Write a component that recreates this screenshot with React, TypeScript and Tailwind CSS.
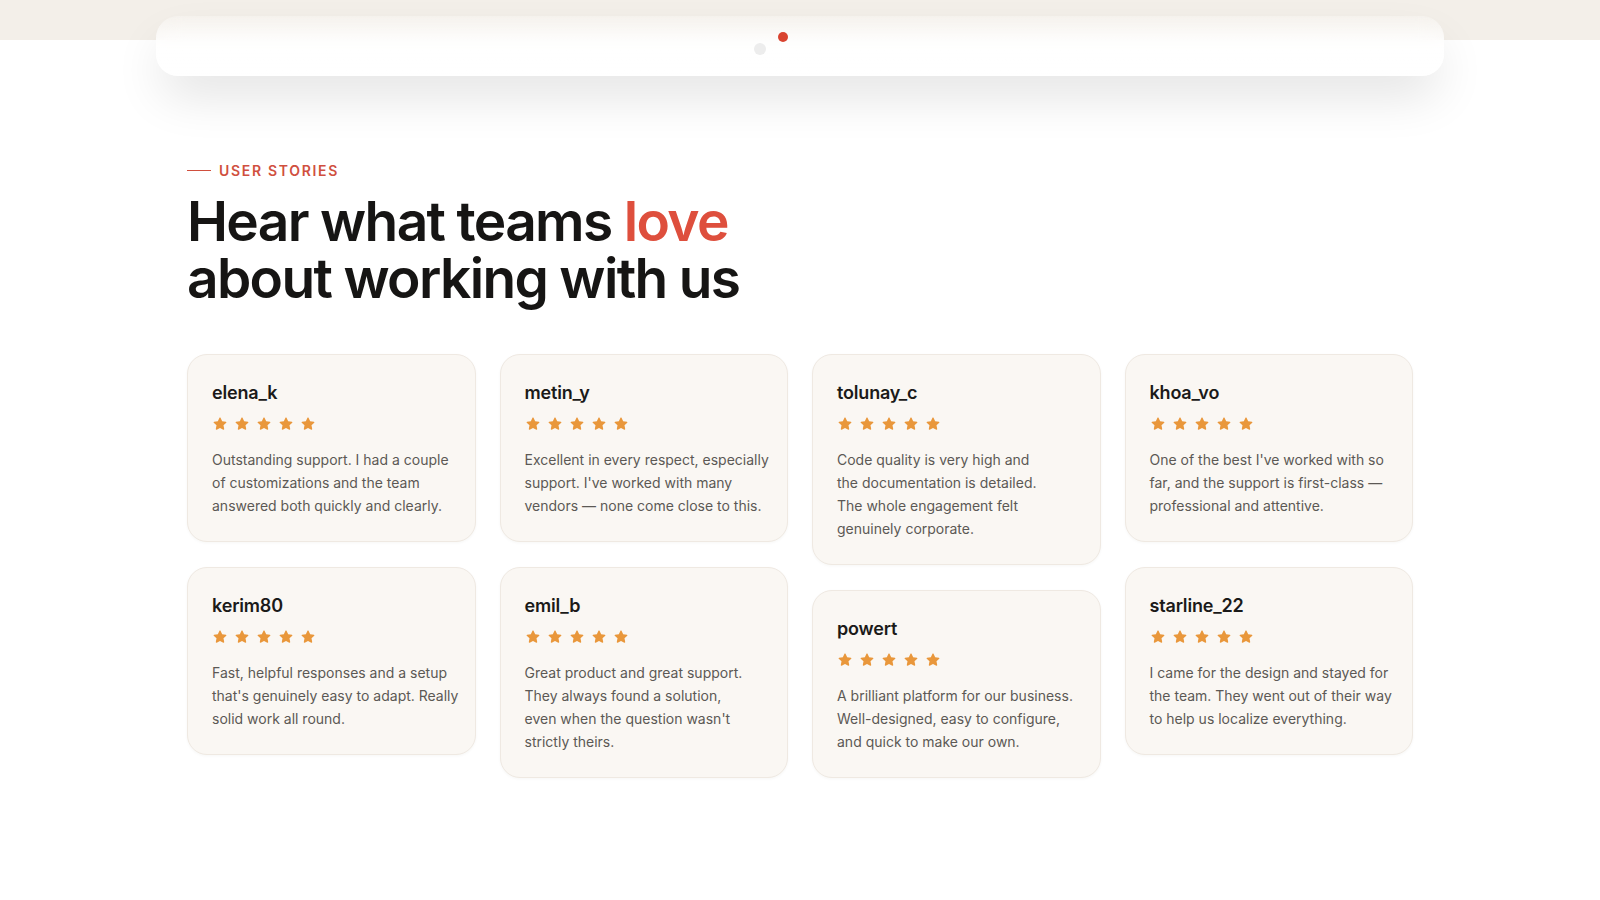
import { ReactNode } from 'react';

type Story = { user: string; lines: string[] };

const columns: Story[][] = [
  [
    { user: 'elena_k', lines: ['Outstanding support. I had a couple', 'of customizations and the team', 'answered both quickly and clearly.'] },
    { user: 'kerim80', lines: ['Fast, helpful responses and a setup', "that's genuinely easy to adapt. Really", 'solid work all round.'] },
  ],
  [
    { user: 'metin_y', lines: ['Excellent in every respect, especially', "support. I've worked with many", 'vendors — none come close to this.'] },
    { user: 'emil_b', lines: ['Great product and great support.', 'They always found a solution,', "even when the question wasn't", 'strictly theirs.'] },
  ],
  [
    { user: 'tolunay_c', lines: ['Code quality is very high and', 'the documentation is detailed.', 'The whole engagement felt', 'genuinely corporate.'] },
    { user: 'powert', lines: ['A brilliant platform for our business.', 'Well-designed, easy to configure,', 'and quick to make our own.'] },
  ],
  [
    { user: 'khoa_vo', lines: ["One of the best I've worked with so", 'far, and the support is first-class —', 'professional and attentive.'] },
    { user: 'starline_22', lines: ['I came for the design and stayed for', 'the team. They went out of their way', 'to help us localize everything.'] },
  ],
];

function StarIcon() {
  return (
    <svg viewBox="0 0 24 24" className="w-4 h-4" fill="#e9973b">
      <path d="M12 2.2c.35 0 .66.2.8.52l2.45 5.2 5.62.72c.74.1 1.04 1 .5 1.52l-4.12 3.9 1.05 5.6c.14.73-.63 1.29-1.29.93L12 17.840l-5.01 2.75c-.66.36-1.430-.2-1.29-.93l1.05-5.6-4.12-3.9c-.54-.52-.24-1.420.5-1.52l5.62-.72 2.45-5.2c.14-.32.45-.52.8-.52z" />
    </svg>
  );
}

function Card({ story }: { story: Story }) {
  return (
    <div className="rounded-[20px] border border-[#efe9e2] bg-[#faf7f3] px-6 pt-6 pb-6 shadow-[0_1px_3px_rgba(60,40,20,0.04)]">
      <h3 className="text-[18px] leading-7 font-semibold text-[#1b1a19] tracking-[-0.01em]">{story.user}</h3>
      <div className="mt-[9px] flex items-center gap-[6px]">
        {[0, 1, 2, 3, 4].map((i) => (
          <StarIcon key={i} />
        ))}
      </div>
      <p className="mt-4 text-[14px] leading-[23px] text-[#5c5955]">
        {story.lines.map((line, i) => (
          <span key={i} className="block whitespace-nowrap">
            {line}
          </span>
        ))}
      </p>
    </div>
  );
}

function Header({ children }: { children?: ReactNode }) {
  return (
    <div className="absolute top-4 left-1/2 -translate-x-1/2 w-[1288px] h-[60px] rounded-[22px] bg-linear-to-b from-white/20 via-white/80 to-white backdrop-blur-md shadow-[0_24px_50px_-6px_rgba(0,0,0,0.12)]">
      {children}
    </div>
  );
}

export default function App() {
  return (
    <div className="relative min-h-[900px] bg-white" style={{ fontFamily: 'Inter, "Noto Sans", sans-serif' }}>
      <div className="h-10 w-full bg-[#f3efe9]" />
      <Header>
        <div className="relative h-full">
          <span className="absolute left-[598px] top-[27px] w-3 h-3 rounded-full bg-[#ededed]" />
          <span className="absolute left-[622px] top-[16px] w-[10px] h-[10px] rounded-full bg-[#d9432f]" />
        </div>
      </Header>

      <section className="w-[1226px] mx-auto pt-[120px] pb-20">
        <div className="flex items-center gap-2 h-5">
          <span className="w-6 h-px bg-[#d04f3e]" />
          <span className="text-[14px] font-semibold tracking-[0.12em] uppercase text-[#d04f3e]">User stories</span>
        </div>
        <h2 className="mt-[13px] text-[55px] leading-[57px] font-semibold tracking-[-0.03em] text-[#161514]">
          <span className="block">
            Hear what teams <span className="text-[#de4f3d]">love</span>
          </span>
          <span className="block">about working with us</span>
        </h2>

        <div className="mt-[47px] grid grid-cols-4 gap-x-6 items-start">
          {columns.map((col, ci) => (
            <div key={ci} className="flex flex-col gap-[25px]">
              {col.map((s) => (
                <Card key={s.user} story={s} />
              ))}
            </div>
          ))}
        </div>
      </section>
    </div>
  );
}
